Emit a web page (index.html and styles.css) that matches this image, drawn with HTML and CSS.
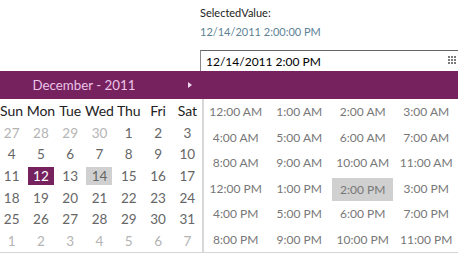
FILE: index.html
```html
<!DOCTYPE html>
<html>
<head>
<meta charset="utf-8">
<link rel="stylesheet" href="styles.css">
</head>
<body>
<div class="page">
  <div class="info">
    <div class="label">SelectedValue:</div>
    <div class="value">12/14/2011 2:00:00 PM</div>
  </div>
  <div class="input">
    <span class="input-text">12/14/2011 2:00 PM</span>
    <svg class="grid-icon" width="8" height="8" viewBox="0 0 8 8">
      <rect x="0" y="0" width="2" height="2"/><rect x="3" y="0" width="2" height="2"/><rect x="6" y="0" width="2" height="2"/>
      <rect x="0" y="3" width="2" height="2"/><rect x="3" y="3" width="2" height="2"/><rect x="6" y="3" width="2" height="2"/>
      <rect x="0" y="6" width="2" height="2"/><rect x="3" y="6" width="2" height="2"/><rect x="6" y="6" width="2" height="2"/>
    </svg>
  </div>
  <div class="bar">
    <div class="bar-left">
      <span class="month">December - 2011</span>
      <span class="next"></span>
    </div>
  </div>
  <div class="body">
    <div class="cal">
      <div class="dow">Sun</div><div class="dow">Mon</div><div class="dow">Tue</div><div class="dow">Wed</div><div class="dow">Thu</div><div class="dow">Fri</div><div class="dow">Sat</div>
      <div class="d other">27</div><div class="d other">28</div><div class="d other">29</div><div class="d other">30</div><div class="d">1</div><div class="d">2</div><div class="d">3</div>
      <div class="d">4</div><div class="d">5</div><div class="d">6</div><div class="d">7</div><div class="d">8</div><div class="d">9</div><div class="d">10</div>
      <div class="d">11</div><div class="d"><span class="sel">12</span></div><div class="d">13</div><div class="d"><span class="today">14</span></div><div class="d">15</div><div class="d">16</div><div class="d">17</div>
      <div class="d">18</div><div class="d">19</div><div class="d">20</div><div class="d">21</div><div class="d">22</div><div class="d">23</div><div class="d">24</div>
      <div class="d">25</div><div class="d">26</div><div class="d">27</div><div class="d">28</div><div class="d">29</div><div class="d">30</div><div class="d">31</div>
      <div class="d other">1</div><div class="d other">2</div><div class="d other">3</div><div class="d other">4</div><div class="d other">5</div><div class="d other">6</div><div class="d other">7</div>
    </div>
    <div class="times">
      <div class="t">12:00 AM</div><div class="t">1:00 AM</div><div class="t">2:00 AM</div><div class="t">3:00 AM</div>
      <div class="t">4:00 AM</div><div class="t">5:00 AM</div><div class="t">6:00 AM</div><div class="t">7:00 AM</div>
      <div class="t">8:00 AM</div><div class="t">9:00 AM</div><div class="t">10:00 AM</div><div class="t">11:00 AM</div>
      <div class="t">12:00 PM</div><div class="t">1:00 PM</div><div class="t"><span class="tsel">2:00 PM</span></div><div class="t">3:00 PM</div>
      <div class="t">4:00 PM</div><div class="t">5:00 PM</div><div class="t">6:00 PM</div><div class="t">7:00 PM</div>
      <div class="t">8:00 PM</div><div class="t">9:00 PM</div><div class="t">10:00 PM</div><div class="t">11:00 PM</div>
    </div>
  </div>
</div>
</body>
</html>
```
FILE: styles.css
```css
html, body {
  margin: 0;
  padding: 0;
  background: #fff;
}
.page {
  width: 458px;
  height: 256px;
  overflow: hidden;
  font-family: Lato, "Open Sans", sans-serif;
}
.info {
  padding: 5px 0 0 200px;
  height: 50px;
  box-sizing: border-box;
}
.label {
  font-size: 11px;
  line-height: 16px;
  color: #222;
}
.value {
  margin-top: 3px;
  font-size: 11px;
  line-height: 16px;
  color: #5d8295;
}
.input {
  margin-left: 200px;
  height: 21px;
  border-top: 1px solid #666;
  border-left: 1px solid #888;
  box-sizing: border-box;
  display: flex;
  align-items: center;
  padding-left: 5px;
  padding-right: 2px;
}
.input-text {
  flex: 1;
  font-size: 12px;
  color: #000;
}
.grid-icon {
  fill: #7a7a7a;
  margin-top: -2px;
}
.bar {
  height: 28px;
  background: #76225f;
}
.bar-left {
  width: 200px;
  height: 100%;
  display: flex;
  align-items: center;
}
.month {
  width: 168px;
  text-align: center;
  color: #ecc4e8;
  font-size: 13.3px;
}
.next {
  margin-left: 20px;
  width: 0;
  height: 0;
  border-top: 3px solid transparent;
  border-bottom: 3px solid transparent;
  border-left: 4px solid #f0d8ee;
}
.body {
  display: flex;
  height: 153px;
  border-bottom: 1px solid #d4d4d4;
}
.cal {
  margin-left: -3px;
  width: 205px;
  border-right: 2px solid #d8d8d8;
  display: grid;
  grid-template-columns: repeat(7, 1fr);
  grid-template-rows: 23px repeat(6, 21.6px);
}
.dow {
  display: flex;
  align-items: center;
  justify-content: center;
  font-size: 14px;
  color: #222;
}
.d {
  display: flex;
  align-items: center;
  justify-content: center;
  font-size: 13.5px;
  color: #666;
}
.d.other {
  color: #b4b4b4;
}
.sel, .today {
  width: 26px;
  height: 18px;
  display: flex;
  align-items: center;
  justify-content: center;
}
.sel {
  background: #76225f;
  color: #fff;
}
.today {
  background: #d0d0d0;
}
.times {
  flex: 1;
  display: grid;
  grid-template-columns: repeat(4, 1fr);
  grid-template-rows: repeat(6, 1fr);
}
.t {
  display: flex;
  align-items: center;
  justify-content: center;
  font-size: 12px;
  color: #777;
}
.tsel {
  width: 61px;
  height: 23px;
  margin-top: 2px;
  display: flex;
  align-items: center;
  justify-content: center;
  background: #d0d0d0;
}
```
